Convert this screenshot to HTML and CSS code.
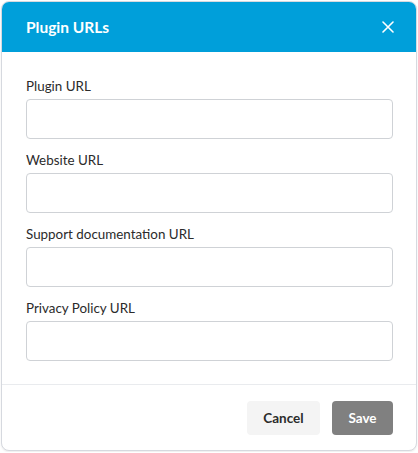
FILE: index.html
```html
<!DOCTYPE html>
<html lang="en">
<head>
    <meta charset="UTF-8">
    <meta name="viewport" content="width=device-width, initial-scale=1.0">
    <title>Plugin URLs</title>
    <link rel="stylesheet" href="styles.css">
</head>
<body>
    <div class="dialog">
        <div class="dialog-header">
            <h2>Plugin URLs</h2>
            <button class="close-btn" aria-label="Close">
                <svg width="12" height="12" viewBox="0 0 12 12">
                    <path d="M1 1 L11 11 M11 1 L1 11" stroke="#fff" stroke-width="1.6" stroke-linecap="round"/>
                </svg>
            </button>
        </div>
        <div class="dialog-body">
            <div class="field">
                <label for="pluginUrl">Plugin URL</label>
                <input type="text" id="pluginUrl">
            </div>
            <div class="field">
                <label for="websiteUrl">Website URL</label>
                <input type="text" id="websiteUrl">
            </div>
            <div class="field">
                <label for="supportUrl">Support documentation URL</label>
                <input type="text" id="supportUrl">
            </div>
            <div class="field">
                <label for="privacyUrl">Privacy Policy URL</label>
                <input type="text" id="privacyUrl">
            </div>
        </div>
        <div class="dialog-footer">
            <button class="btn btn-cancel">Cancel</button>
            <button class="btn btn-save">Save</button>
        </div>
    </div>
</body>
</html>
```

FILE: styles.css
```css
body {
    font-family: Lato, "Open Sans", sans-serif;
    margin: 0;
    padding: 1px;
    background-color: #fff;
}
.dialog {
    width: 416px;
    height: 450px;
    box-sizing: border-box;
    border: 1px solid #d6d9df;
    border-radius: 8px;
    overflow: hidden;
    background-color: #fff;
    box-shadow: 0 1px 2px rgba(0,0,0,0.08);
    display: flex;
    flex-direction: column;
}
.dialog-header {
    height: 50px;
    flex-shrink: 0;
    background-color: #009fda;
    display: flex;
    align-items: center;
    justify-content: space-between;
    padding: 0 18px 0 24px;
}
.dialog-header h2 {
    margin: 0;
    color: #fff;
    font-size: 15.5px;
    font-weight: 700;
}
.close-btn {
    background: none;
    border: none;
    padding: 4px;
    display: flex;
    cursor: pointer;
}
.dialog-body {
    padding: 24px 23px 23px 24px;
    border-bottom: 1px solid #e9ebee;
}
.field {
    margin-bottom: 11px;
}
.field:last-child {
    margin-bottom: 0;
}
.field label {
    display: block;
    font-size: 13.4px;
    line-height: 20px;
    color: #2b2b2b;
    margin-bottom: 3px;
}
.field input {
    display: block;
    width: 100%;
    height: 40px;
    box-sizing: border-box;
    border: 1px solid #cfd2d6;
    border-radius: 4px;
    padding: 0 10px;
    font-size: 14px;
    font-family: inherit;
}
.dialog-footer {
    display: flex;
    justify-content: flex-end;
    gap: 12px;
    padding: 16px 23px 15px 24px;
}
.btn {
    height: 34px;
    border: none;
    border-radius: 4px;
    font-family: inherit;
    font-size: 13.5px;
    font-weight: 700;
    cursor: pointer;
}
.btn-cancel {
    width: 73px;
    background-color: #f4f4f4;
    color: #2b2b2b;
}
.btn-save {
    width: 61px;
    background-color: #808080;
    color: #fff;
}
```
